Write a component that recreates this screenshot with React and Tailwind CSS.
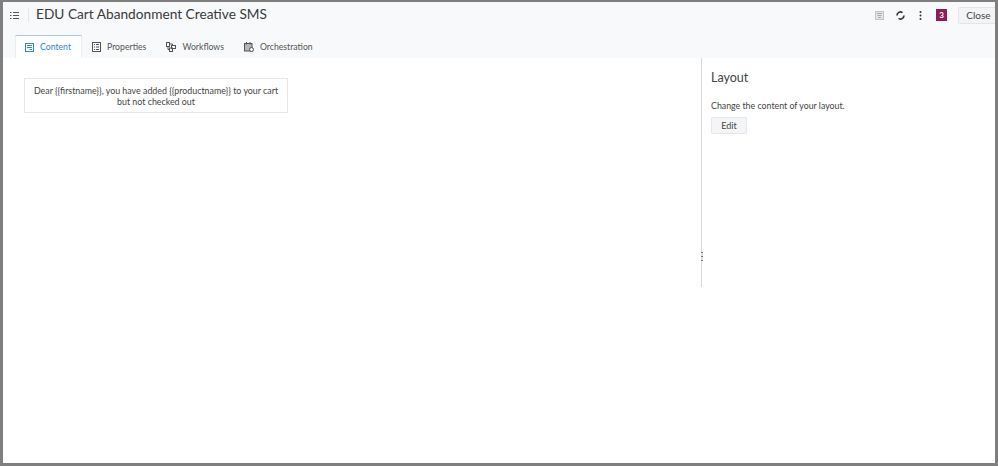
const TABS = [
  { label: 'Content', icon: ContentIcon, active: true },
  { label: 'Properties', icon: PropertiesIcon },
  { label: 'Workflows', icon: WorkflowsIcon },
  { label: 'Orchestration', icon: OrchestrationIcon },
];

const MESSAGE = 'Dear {{firstname}}, you have added {{productname}} to your cart but not checked out';

function ContentIcon() {
  return (
    <svg width="9" height="9" viewBox="0 0 9 9" fill="none" stroke="currentColor" strokeWidth="1">
      <rect x="0.5" y="0.5" width="8" height="8" />
      <path d="M2 2.500h5M2 4.500h5M4.500 6.500h2.500" />
    </svg>
  );
}

function PropertiesIcon() {
  return (
    <svg width="9" height="10" viewBox="0 0 9 10" fill="none" stroke="currentColor" strokeWidth="1">
      <rect x="0.5" y="0.5" width="8" height="9" />
      <path d="M2 2.500h1M4 2.500h3M2 5h1M4 5h3M2 7.500h1M4 7.500h3" />
    </svg>
  );
}

function WorkflowsIcon() {
  return (
    <svg width="10" height="10" viewBox="0 0 10 10" fill="none" stroke="currentColor" strokeWidth="1">
      <rect x="0.5" y="0.5" width="3" height="4" />
      <rect x="5.500" y="3.500" width="4" height="3" />
      <rect x="3.500" y="6" width="3" height="3.500" />
      <path d="M2 4.500v3h1.500M3.500 2h3v1.500" />
    </svg>
  );
}

function OrchestrationIcon() {
  return (
    <svg width="10" height="10" viewBox="0 0 10 10" fill="none" stroke="currentColor" strokeWidth="1">
      <rect x="0.5" y="1.500" width="7.500" height="7.500" fill="currentColor" fillOpacity="0.4" />
      <path d="M2.500 0v2.500M6 0v2.500" />
      <circle cx="7.500" cy="7.500" r="2" fill="#f8f9fb" />
    </svg>
  );
}

export default function App() {
  return (
    <div className="w-[998px] h-[466px] border-solid border-t-2 border-l-[3px] border-r-[3px] border-b-[3px] border-[#7f7f7f] bg-white flex flex-col overflow-hidden font-['Lato','Noto_Sans',sans-serif] text-[#3f3f3f]">
      <header className="h-[56px] shrink-0 bg-[#f8f9fb] flex flex-col">
        <div className="h-[26px] shrink-0 flex items-center">
          <svg className="ml-[7px] text-[#555]" width="9" height="7" viewBox="0 0 9 7" fill="none" stroke="currentColor" strokeWidth="1">
            <path d="M0 .5h1.500M3 .5h6M0 3.500h1.500M3 3.500h6M0 6.500h1.500M3 6.500h6" />
          </svg>
          <span className="ml-[9px] w-px h-[14px] bg-[#e4e6ea]" />
          <h1 className="ml-[7px] -mt-[2px] text-[13.7px] leading-none text-[#3a3a3a]">EDU Cart Abandonment Creative SMS</h1>
          <div className="ml-auto flex items-center">
            <svg className="text-[#a8a8a8]" width="9" height="9" viewBox="0 0 9 9">
              <rect x="0.5" y="0.5" width="8" height="8" fill="#e4e6e8" stroke="#c4c4c4" />
              <path d="M2 2.500h5M2.500 4.500h4M3 6.500h3" stroke="currentColor" />
            </svg>
            <svg className="ml-[12px] text-[#333]" width="9" height="9" viewBox="0 0 9 9" fill="none" stroke="currentColor" strokeWidth="1.600">
              <path d="M1 4.500A3.500 3.500 0 0 1 6.500 1.600M8 4.500a3.500 3.500 0 0 1-5.500 2.900" />
            </svg>
            <svg className="ml-[14px] text-[#333]" width="3" height="9" viewBox="0 0 3 9" fill="currentColor">
              <circle cx="1.500" cy="1" r="1" />
              <circle cx="1.500" cy="4.500" r="1" />
              <circle cx="1.500" cy="8" r="1" />
            </svg>
            <span className="ml-[14px] w-[11px] h-[12px] bg-[#8c1d58] text-white text-[8px] font-bold leading-[12px] text-center">3</span>
            <button className="ml-[11px] w-[37px] h-[17px] bg-[#f3f4f6] border border-[#e3e5e8] border-r-0 rounded-l-[2px] text-[10px] leading-none text-[#444] pl-[3px]">Close</button>
          </div>
        </div>
        <nav className="flex h-[23px] mt-[7px] ml-3">
          {TABS.map(({ label, icon: Icon, active }) => (
            <div
              key={label}
              className={active
                ? 'flex items-center h-[23px] w-[67px] pl-[9px] gap-[6px] bg-white border-t border-x border-t-[#a9cbe6] border-x-[#e8edf2] text-[#2f86c9] text-[8.7px]'
                : 'flex items-center h-[23px] pl-[10px] pr-[10px] gap-[6px] text-[#555] text-[8.7px]'}
            >
              <Icon />
              <span>{label}</span>
            </div>
          ))}
        </nav>
      </header>
      <main className="flex h-[229px] shrink-0">
        <section className="w-[698px] shrink-0 pl-[21px] pt-5">
          <div className="w-[264px] h-[35px] border border-[#e6e6e6] flex items-center justify-center text-center text-[8.85px] leading-[11px] text-[#444] px-1">
            {MESSAGE}
          </div>
        </section>
        <aside className="relative flex-1 border-l border-[#d9d9d9] pl-[9px] pt-[12px]">
          <h2 className="text-[12.5px] leading-4 text-[#444]">Layout</h2>
          <p className="mt-[14px] text-[8.8px] leading-3 text-[#444]">Change the content of your layout.</p>
          <button className="mt-[5px] block w-9 h-[17px] bg-[#f4f5f7] border border-[#e6e7ea] rounded-[2px] text-[9px] leading-none text-[#444]">Edit</button>
          <span className="absolute -left-[1px] top-[194px] w-[2px] h-[9px] bg-[repeating-linear-gradient(#777_0,#777_1px,#ddd_1px,#ddd_4px)]" />
        </aside>
      </main>
    </div>
  );
}
